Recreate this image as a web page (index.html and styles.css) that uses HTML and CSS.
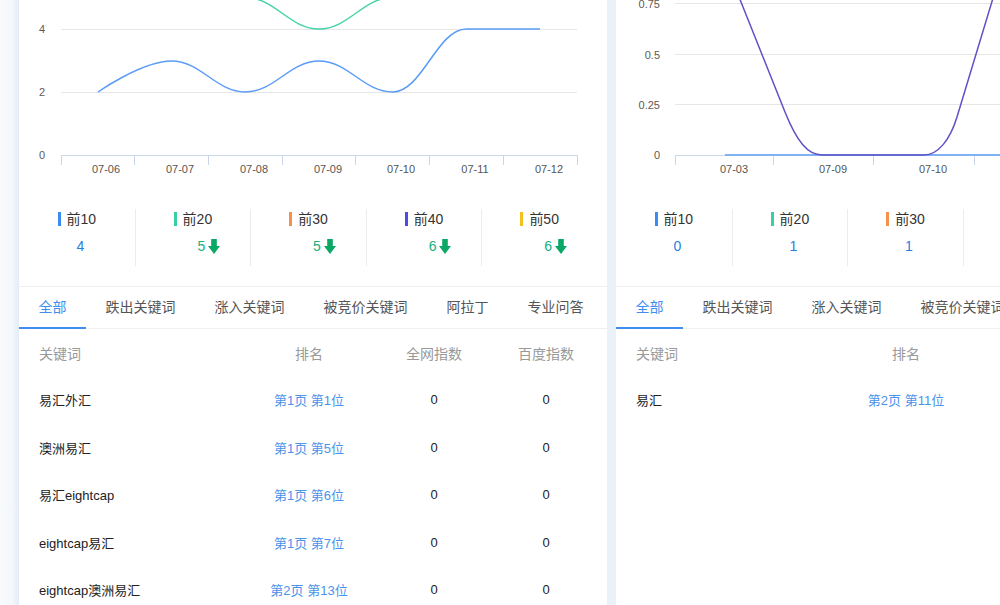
FILE: index.html
```html
<!DOCTYPE html>
<html lang="zh-CN">
<head>
<meta charset="utf-8">
<title>关键词排名</title>
<link rel="stylesheet" href="styles.css">
</head>
<body>
<div class="page">
  <div class="strip"></div>

  <section class="card">
    <svg class="chart" width="588" height="190" viewBox="19 0 588 190">
      <g class="grid">
        <line x1="61" y1="-33.5" x2="577" y2="-33.5"/>
        <line x1="61" y1="29.5" x2="577" y2="29.5"/>
        <line x1="61" y1="92.5" x2="577" y2="92.5"/>
      </g>
      <g class="axis">
        <line x1="61" y1="155.5" x2="578" y2="155.5"/>
        <line x1="61.5" y1="155" x2="61.5" y2="165"/>
        <line x1="134.5" y1="155" x2="134.5" y2="165"/>
        <line x1="208.5" y1="155" x2="208.5" y2="165"/>
        <line x1="282.5" y1="155" x2="282.5" y2="165"/>
        <line x1="355.5" y1="155" x2="355.5" y2="165"/>
        <line x1="429.5" y1="155" x2="429.5" y2="165"/>
        <line x1="503.5" y1="155" x2="503.5" y2="165"/>
        <line x1="577.5" y1="155" x2="577.5" y2="165"/>
      </g>
      <g class="ylab">
        <text x="45" y="33">4</text>
        <text x="45" y="96">2</text>
        <text x="45" y="159">0</text>
      </g>
      <g class="xlab">
        <text x="106" y="173">07-06</text>
        <text x="180" y="173">07-07</text>
        <text x="254" y="173">07-08</text>
        <text x="328" y="173">07-09</text>
        <text x="401" y="173">07-10</text>
        <text x="475" y="173">07-11</text>
        <text x="549" y="173">07-12</text>
      </g>
      <path class="s-green" d="M245.3,-2.5 C274.8,-2.5 289.5,29 319,29 C348.5,29 363.2,-2.5 392.7,-2.5"/>
      <path class="s-blue" d="M98,92 C98,92 142.1,61 171.6,61 C201.1,61 215.8,92 245.3,92 C274.8,92 289.5,61 319,61 C348.5,61 363.2,92 392.7,92 C422.2,92 436.9,29 466.4,29 C495.9,29 540,29 540,29"/>
    </svg>

    <div class="legend">
      <div class="cell">
        <div class="lab"><i class="bar c1"></i>前10</div>
        <div class="val">4</div>
      </div>
      <div class="cell">
        <div class="lab"><i class="bar c2"></i>前20</div>
        <div class="val down">5<svg class="arrow" width="12" height="15" viewBox="0 0 12 15"><path d="M3.2 0H8.8V7H12L6 15L0 7H3.2Z"/></svg></div>
      </div>
      <div class="cell">
        <div class="lab"><i class="bar c3"></i>前30</div>
        <div class="val down">5<svg class="arrow" width="12" height="15" viewBox="0 0 12 15"><path d="M3.2 0H8.8V7H12L6 15L0 7H3.2Z"/></svg></div>
      </div>
      <div class="cell">
        <div class="lab"><i class="bar c4"></i>前40</div>
        <div class="val down">6<svg class="arrow" width="12" height="15" viewBox="0 0 12 15"><path d="M3.2 0H8.8V7H12L6 15L0 7H3.2Z"/></svg></div>
      </div>
      <div class="cell">
        <div class="lab"><i class="bar c5"></i>前50</div>
        <div class="val down">6<svg class="arrow" width="12" height="15" viewBox="0 0 12 15"><path d="M3.2 0H8.8V7H12L6 15L0 7H3.2Z"/></svg></div>
      </div>
    </div>

    <div class="tabs">
      <div class="tab active">全部</div>
      <div class="tab">跌出关键词</div>
      <div class="tab">涨入关键词</div>
      <div class="tab">被竞价关键词</div>
      <div class="tab">阿拉丁</div>
      <div class="tab">专业问答</div>
    </div>

    <div class="table">
      <div class="row head">
        <div class="c-kw">关键词</div>
        <div class="c-rank">排名</div>
        <div class="c-idx">全网指数</div>
        <div class="c-bd">百度指数</div>
      </div>
      <div class="row">
        <div class="c-kw">易汇外汇</div>
        <div class="c-rank link">第1页 第1位</div>
        <div class="c-idx">0</div>
        <div class="c-bd">0</div>
      </div>
      <div class="row">
        <div class="c-kw">澳洲易汇</div>
        <div class="c-rank link">第1页 第5位</div>
        <div class="c-idx">0</div>
        <div class="c-bd">0</div>
      </div>
      <div class="row">
        <div class="c-kw">易汇eightcap</div>
        <div class="c-rank link">第1页 第6位</div>
        <div class="c-idx">0</div>
        <div class="c-bd">0</div>
      </div>
      <div class="row">
        <div class="c-kw">eightcap易汇</div>
        <div class="c-rank link">第1页 第7位</div>
        <div class="c-idx">0</div>
        <div class="c-bd">0</div>
      </div>
      <div class="row">
        <div class="c-kw">eightcap澳洲易汇</div>
        <div class="c-rank link">第2页 第13位</div>
        <div class="c-idx">0</div>
        <div class="c-bd">0</div>
      </div>
    </div>
  </section>

  <section class="card">
    <svg class="chart" width="588" height="190" viewBox="616 0 588 190">
      <g class="grid">
        <line x1="675" y1="3.5" x2="1174" y2="3.5"/>
        <line x1="675" y1="54.5" x2="1174" y2="54.5"/>
        <line x1="675" y1="104.5" x2="1174" y2="104.5"/>
      </g>
      <g class="axis">
        <line x1="675" y1="155.5" x2="1175" y2="155.5"/>
        <line x1="675.5" y1="155" x2="675.5" y2="165"/>
        <line x1="773.5" y1="155" x2="773.5" y2="165"/>
        <line x1="873.5" y1="155" x2="873.5" y2="165"/>
        <line x1="974.5" y1="155" x2="974.5" y2="165"/>
        <line x1="1074.5" y1="155" x2="1074.5" y2="165"/>
        <line x1="1174.5" y1="155" x2="1174.5" y2="165"/>
      </g>
      <g class="ylab">
        <text x="660" y="7.5">0.75</text>
        <text x="660" y="59">0.5</text>
        <text x="660" y="109">0.25</text>
        <text x="660" y="159">0</text>
      </g>
      <g class="xlab">
        <text x="734" y="173">07-03</text>
        <text x="833" y="173">07-09</text>
        <text x="933" y="173">07-10</text>
        <text x="1033" y="173">07-11</text>
        <text x="1133" y="173">07-12</text>
      </g>
      <path class="s-base" d="M725,155 L1174,155"/>
      <path class="s-purple" d="M733,-18 L785,112 C797,142 808,155 822,155 L924,155 C938,155 950,140 957,117 L1000,-25"/>
    </svg>

    <div class="legend">
      <div class="cell">
        <div class="lab"><i class="bar c1"></i>前10</div>
        <div class="val">0</div>
      </div>
      <div class="cell">
        <div class="lab"><i class="bar c2"></i>前20</div>
        <div class="val">1</div>
      </div>
      <div class="cell">
        <div class="lab"><i class="bar c3"></i>前30</div>
        <div class="val">1</div>
      </div>
      <div class="cell">
        <div class="lab"><i class="bar c4"></i>前40</div>
        <div class="val">1</div>
      </div>
      <div class="cell">
        <div class="lab"><i class="bar c5"></i>前50</div>
        <div class="val">1</div>
      </div>
    </div>

    <div class="tabs">
      <div class="tab active">全部</div>
      <div class="tab">跌出关键词</div>
      <div class="tab">涨入关键词</div>
      <div class="tab">被竞价关键词</div>
      <div class="tab">阿拉丁</div>
      <div class="tab">专业问答</div>
    </div>

    <div class="table">
      <div class="row head">
        <div class="c-kw">关键词</div>
        <div class="c-rank">排名</div>
        <div class="c-idx">全网指数</div>
        <div class="c-bd">百度指数</div>
      </div>
      <div class="row">
        <div class="c-kw">易汇</div>
        <div class="c-rank link">第2页 第11位</div>
        <div class="c-idx">0</div>
        <div class="c-bd">0</div>
      </div>
    </div>
  </section>
</div>
</body>
</html>
```

FILE: styles.css
```css
* {
  box-sizing: border-box;
}

html, body {
  margin: 0;
  padding: 0;
  width: 1000px;
  height: 605px;
  overflow: hidden;
  background: #ebf1f8;
  font-family: "Liberation Sans", "Noto Sans CJK SC", sans-serif;
  color: #333;
}

.page {
  display: flex;
  width: 1300px;
  height: 605px;
}

.strip {
  flex: 0 0 19px;
  width: 19px;
  background: linear-gradient(to right, #f8fafd 0%, #f4f7fb 65%, #e3ecf7 100%);
}

.card {
  flex: 0 0 588px;
  width: 588px;
  height: 605px;
  margin-right: 9px;
  background: #fff;
  overflow: hidden;
}

.chart {
  display: block;
}

.grid line {
  stroke: #e6e6e6;
  stroke-width: 1;
}

.axis line {
  stroke: #ccd6eb;
  stroke-width: 1;
}

.ylab text {
  font-family: "Liberation Sans", sans-serif;
  font-size: 11px;
  fill: #5f5a55;
  text-anchor: end;
}

.xlab text {
  font-family: "Liberation Sans", sans-serif;
  font-size: 11px;
  fill: #555;
  text-anchor: middle;
}

.s-blue {
  fill: none;
  stroke: #5a9cf8;
  stroke-width: 1.5;
}

.s-green {
  fill: none;
  stroke: #45d2a8;
  stroke-width: 1.5;
}

.s-purple {
  fill: none;
  stroke: #5e52c6;
  stroke-width: 1.5;
}

.s-base {
  fill: none;
  stroke: #7fb1f6;
  stroke-width: 2;
}

.legend {
  display: grid;
  grid-template-columns: repeat(5, 115.6px);
  padding: 19px 0 20px;
  height: 96px;
}

.cell {
  height: 57px;
  border-left: 1px solid #ececec;
  display: flex;
  flex-direction: column;
  align-items: center;
}

.cell:first-child {
  border-left: none;
}

.lab {
  display: flex;
  align-items: center;
  height: 20px;
  font-size: 14px;
  color: #333;
  line-height: 20px;
}

.bar {
  display: inline-block;
  width: 3px;
  height: 14px;
  margin-right: 6px;
}

.c1 { background: #3b8cf0; }
.c2 { background: #39cfa5; }
.c3 { background: #f5914a; }
.c4 { background: #4b4be8; }
.c5 { background: #f5bf1e; }

.val {
  margin-top: 7px;
  height: 20px;
  line-height: 20px;
  font-size: 14px;
  color: #1f7fdf;
  display: flex;
  align-items: center;
  padding-left: 7px;
}

.val.down {
  color: #17b07e;
  padding-left: 32px;
}

.arrow {
  display: block;
  margin-left: 3px;
  fill: #0aa864;
}

.tabs {
  display: flex;
  height: 43px;
  border-top: 1px solid #f0f0f0;
  border-bottom: 1px solid #f0f0f0;
}

.tab {
  flex: 0 0 auto;
  height: 42px;
  padding: 0 19.5px;
  line-height: 40px;
  font-size: 14px;
  color: #555;
  border-bottom: 2px solid transparent;
  white-space: nowrap;
}

.tab.active {
  color: #3d8ef0;
  border-bottom-color: #3d8ef0;
}

.row {
  display: grid;
  grid-template-columns: 228px 124px 126px 98px;
  height: 47.5px;
  align-items: center;
  font-size: 13px;
  color: #222;
}

.row.head {
  height: 47px;
  font-size: 14px;
  color: #999;
}

.c-kw {
  padding-left: 20px;
  white-space: nowrap;
}

.c-rank, .c-idx, .c-bd {
  text-align: center;
  white-space: nowrap;
}

.link {
  color: #4a92ea;
}
```
